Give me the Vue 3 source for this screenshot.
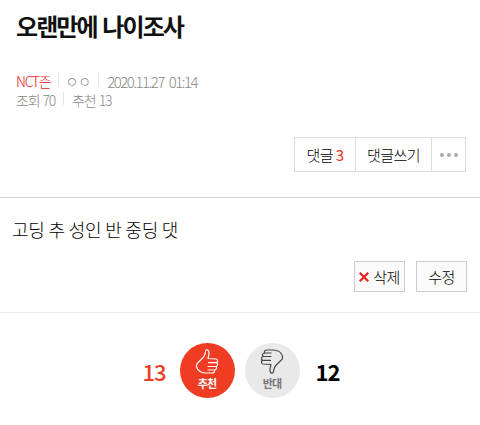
<template>
  <main class="page">
    <header class="head">
      <h1 class="title">오랜만에 나이조사</h1>
      <div class="meta">
        <span class="nick">NCT즌</span>
        <span class="sep"></span>
        <span class="ip">ㅇㅇ</span>
        <span class="sep"></span>
        <span class="date">2020.11.27 01:14</span>
      </div>
      <div class="meta second">
        <span>조회 70</span>
        <span class="sep"></span>
        <span>추천 13</span>
      </div>
      <div class="tools">
        <div class="group">
          <button class="tool first">댓글 <em>3</em></button>
          <button class="tool write">댓글쓰기</button>
          <button class="tool more" aria-label="더보기"><i></i><i></i><i></i></button>
        </div>
      </div>
    </header>
    <section class="body">
      <p class="text">고딩 추 성인 반 중딩 댓</p>
      <div class="actions">
        <button class="act del">
          <svg width="10" height="10" viewBox="0 0 10 10" stroke="#ee2222" stroke-width="2.2"><path d="M.7.7l8.600 8.600M9.300.7L.7 9.300"/></svg>
          <span>삭제</span>
        </button>
        <button class="act edit">수정</button>
      </div>
    </section>
    <section class="votes">
      <span class="count up">13</span>
      <div class="circle red">
        <svg width="24" height="25" viewBox="0 0 24 25" fill="none" stroke="#fff" stroke-width="1.2" stroke-linecap="round" stroke-linejoin="round">
          <path d="M1.500 15.500C3 12.500 8 10 9.500 6.500 10.200 4.500 10.300 2 11.300.9 13 .2 14 2 14 4c0 2-.7 4-1 5.500l8 .5c2 .3 2 3 .5 3.600 1.500.9 1.300 3.400-.5 3.900 1 1.300.5 3.300-1.500 3.500.5 1.500-.5 3-2.500 3h-6c-4 0-8.500-2-9.500-6.500z"/>
          <path d="M13.500 13.600h8M13 17.500h8M13 21h6.500"/>
        </svg>
        <span>추천</span>
      </div>
      <div class="circle gray">
        <svg width="24" height="25" viewBox="0 0 24 25" fill="none" stroke="#444" stroke-width="1.2" stroke-linecap="round" stroke-linejoin="round">
          <g transform="rotate(180 12 12.500)">
            <path d="M1.500 15.500C3 12.500 8 10 9.500 6.500 10.200 4.500 10.300 2 11.300.9 13 .2 14 2 14 4c0 2-.7 4-1 5.500l8 .5c2 .3 2 3 .5 3.600 1.500.9 1.300 3.400-.5 3.900 1 1.300.5 3.300-1.500 3.500.5 1.500-.5 3-2.500 3h-6c-4 0-8.500-2-9.500-6.500z"/>
            <path d="M13.500 13.600h8M13 17.500h8M13 21h6.500"/>
          </g>
        </svg>
        <span>반대</span>
      </div>
      <span class="count down">12</span>
    </section>
  </main>
</template>

<script setup>
</script>

<style>
html, body { margin: 0; background: #fff; }
</style>

<style scoped>
.page {
  width: 480px;
  height: 425px;
  overflow: hidden;
  font-family: "Noto Sans CJK KR", "Noto Sans", sans-serif;
  color: #222;
}
button { font-family: inherit; padding: 0; margin: 0; cursor: pointer; }
.head {
  height: 198px;
  box-sizing: border-box;
  padding: 8px 14px 0 16px;
  border-bottom: 1px solid #d4d4d4;
}
.title {
  margin: 0;
  font-size: 24px;
  line-height: 36px;
  font-weight: 700;
  letter-spacing: -1.9px;
  word-spacing: 2px;
  color: #111;
}
.meta {
  display: flex;
  align-items: center;
  margin-top: 28px;
  height: 19px;
  line-height: 19px;
  font-size: 14px;
  font-weight: 300;
  letter-spacing: -1.25px;
  word-spacing: 1.5px;
  color: #888;
}
.meta.second { margin-top: 0; }
.nick { color: #e92020; }
.date {
  font-size: 15px;
  letter-spacing: -1.5px;
  word-spacing: 3px;
}
.sep {
  width: 1px;
  height: 13px;
  background: #e6e6e6;
  margin: -5px 8px 0;
}
.ip { letter-spacing: 0; margin: 0 -1px 0 -2px; }
.tools {
  display: flex;
  justify-content: flex-end;
  margin-top: 27px;
}
.group {
  display: flex;
  height: 35px;
  box-sizing: border-box;
  border: 1px solid #dcdcdc;
  background: #fff;
}
.tool {
  border: 0;
  background: #fff;
  font-size: 15px;
  font-weight: 300;
  letter-spacing: -0.6px;
  color: #000;
  border-left: 1px solid #dcdcdc;
}
.tool em { font-style: normal; font-weight: 400; color: #f02a2a; }
.first { width: 60px; border-left: 0; }
.write { width: 76px; }
.more {
  width: 34px;
  display: flex;
  align-items: center;
  justify-content: center;
  gap: 3px;
}
.more i {
  width: 4px;
  height: 4px;
  border-radius: 50%;
  background: #aaa;
}
.body {
  height: 115px;
  box-sizing: border-box;
  padding: 17px 13px 0 12px;
  border-bottom: 1px solid #e8e8e8;
}
.text {
  margin: 0;
  font-size: 18px;
  line-height: 28px;
  font-weight: 300;
  letter-spacing: -0.2px;
  color: #000;
}
.actions {
  display: flex;
  justify-content: flex-end;
  gap: 11px;
  margin-top: 18px;
}
.act {
  height: 31px;
  width: 51px;
  border: 1px solid #ccc;
  background: #fafafa;
  font-size: 15px;
  font-weight: 300;
  letter-spacing: -0.6px;
  color: #000;
  display: flex;
  align-items: center;
  justify-content: center;
  gap: 4px;
}
.votes {
  display: flex;
  justify-content: center;
  align-items: center;
  gap: 10px;
  margin-top: 30px;
  height: 55px;
  padding-left: 2px;
}
.count {
  width: 40px;
  font-size: 22px;
  font-weight: 700;
  letter-spacing: -1px;
  color: #000;
  padding-top: 1px;
}
.count.up { color: #ef3c23; text-align: right; margin-right: 4px; margin-left: -1px; font-weight: 500; }
.count.down { text-align: left; margin-left: 6px; }
.circle {
  width: 55px;
  height: 55px;
  border-radius: 50%;
  display: flex;
  flex-direction: column;
  align-items: center;
  padding-top: 6px;
  box-sizing: border-box;
  font-size: 11px;
  line-height: 14px;
  font-weight: 700;
  letter-spacing: -0.8px;
}
.circle svg { display: block; margin-bottom: 2px; }
.red { background: #ef3c23; color: #fff; }
.gray { background: #e9e9e9; color: #777; }
</style>
